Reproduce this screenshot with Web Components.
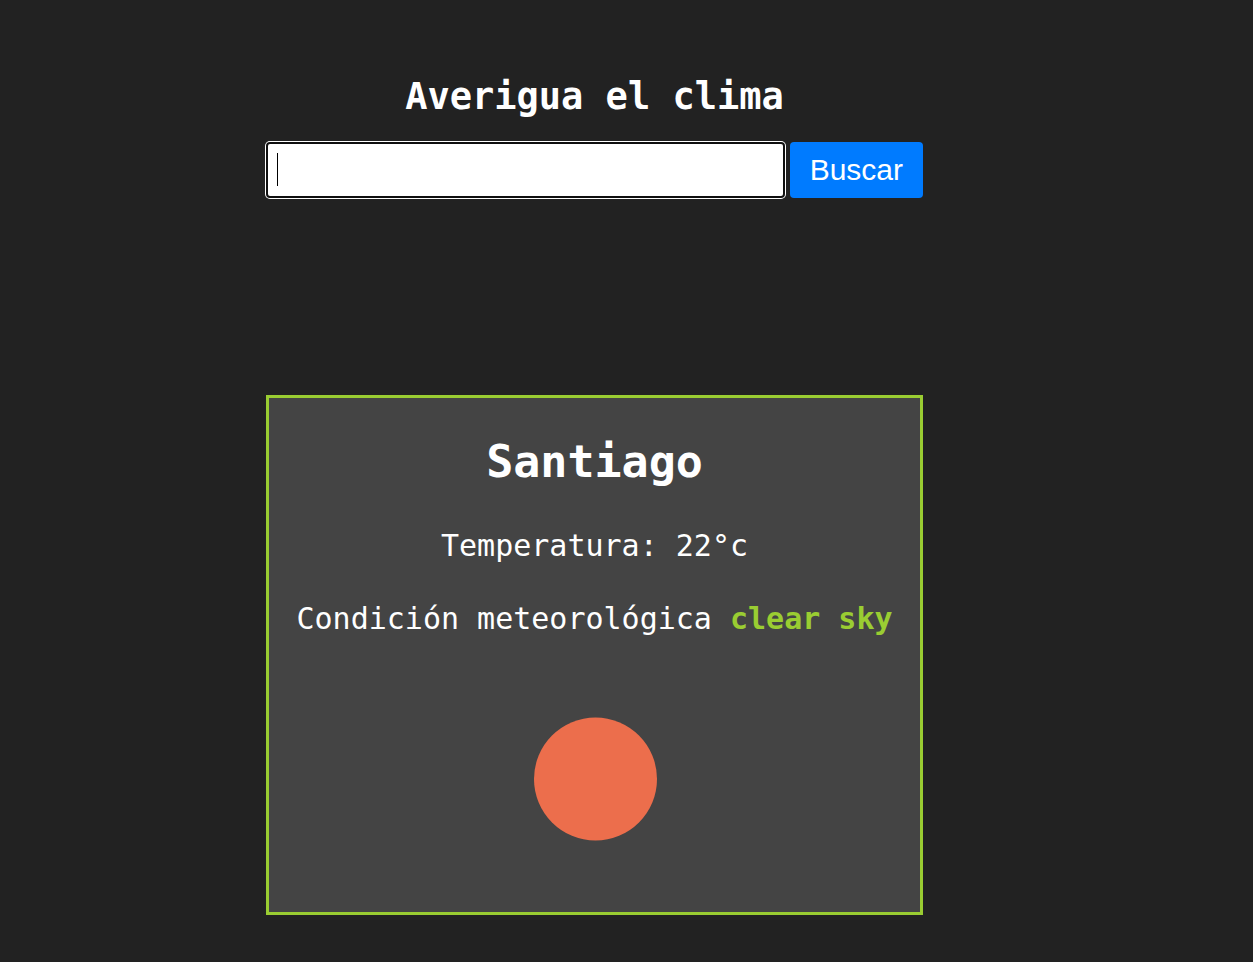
<!DOCTYPE html>
<html lang="es">
<head>
<meta charset="utf-8">
<meta name="viewport" content="width=device-width, initial-scale=1">
<title>Averigua el clima</title>
<style>
  body {
    margin: 0;
    background: #222;
    color: #fff;
    font-family: "DejaVu Sans Mono", "Liberation Mono", monospace;
    font-size: 30px;
    line-height: 36px;
  }
</style>
</head>
<body>
<weather-app>
  <weather-search></weather-search>
  <weather-card city="Santiago" temperature="22" condition="clear sky">
    <sun-icon></sun-icon>
  </weather-card>
</weather-app>

<script>
class BaseElement extends HTMLElement {
  constructor() {
    super();
    this.attachShadow({ mode: "open" });
  }
  render(html) {
    const template = document.createElement("template");
    template.innerHTML = html;
    this.shadowRoot.append(template.content.cloneNode(true));
  }
}

customElements.define("weather-app", class extends BaseElement {
  connectedCallback() {
    this.render(`
      <style>
        :host { display: block; padding: 75px 64px 47px 0; }
        main {
          display: flex;
          flex-direction: column;
          max-width: 657px;
          margin: 0 auto;
        }
        h1 {
          margin: 0 0 23px;
          font-size: 37px;
          line-height: 44px;
          text-align: center;
        }
      </style>
      <main>
        <h1>Averigua el clima</h1>
        <slot></slot>
      </main>`);
  }
});

customElements.define("weather-search", class extends BaseElement {
  connectedCallback() {
    this.render(`
      <style>
        :host { display: block; margin-bottom: 197px; }
        form { display: flex; gap: 5px; }
        input, button {
          box-sizing: border-box;
          height: 56px;
          margin: 0;
          border-radius: 4px;
          font-family: "Liberation Sans", Arial, sans-serif;
          font-size: 30px;
        }
        input {
          flex: 1;
          min-width: 0;
          padding: 0 9px;
          border: 2px solid #101010;
          outline: none;
          box-shadow: 0 0 0 1px #fff;
          color: #000;
          caret-color: transparent;
          background: #fff linear-gradient(#000, #000) 9px 9px / 1px 33px no-repeat;
        }
        input:not(:placeholder-shown) { background-image: none; caret-color: #000; }
        button {
          padding: 0 20px;
          border: 0;
          background: #007bff;
          color: #fff;
          cursor: pointer;
        }
      </style>
      <form>
        <input type="text" aria-label="Ciudad" placeholder=" " autocomplete="off">
        <button type="submit">Buscar</button>
      </form>`);
    this.shadowRoot.querySelector("form").addEventListener("submit", e => e.preventDefault());
  }
});

customElements.define("weather-card", class extends BaseElement {
  connectedCallback() {
    this.render(`
      <style>
        :host {
          display: block;
          padding: 38px 20px 33px;
          border: 3px solid yellowgreen;
          background: #444;
          text-align: center;
        }
        h2 { margin: 0 0 40px; font-size: 45px; line-height: 52px; }
        p { margin: 0 0 37px; }
        p:last-of-type { margin-bottom: 42px; }
        strong { color: yellowgreen; }
      </style>
      <h2></h2>
      <p>Temperatura: <span></span></p>
      <p>Condición meteorológica <strong></strong></p>
      <slot></slot>`);
    const $ = s => this.shadowRoot.querySelector(s);
    $("h2").textContent = this.getAttribute("city");
    $("span").textContent = this.getAttribute("temperature") + "°c";
    $("strong").textContent = this.getAttribute("condition");
  }
});

customElements.define("sun-icon", class extends BaseElement {
  connectedCallback() {
    this.render(`
      <style>
        :host { display: block; }
        svg { display: block; margin: 0 auto; }
      </style>
      <svg width="200" height="200" viewBox="0 0 200 200" aria-hidden="true">
        <circle cx="100.5" cy="100" r="61.5" fill="#ec6e4c"/>
      </svg>`);
  }
});
</script>
</body>
</html>
